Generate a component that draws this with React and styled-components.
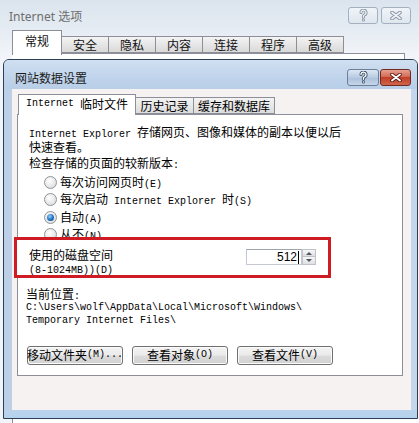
import React from 'react';
import styled, { createGlobalStyle, css } from 'styled-components';

const GlobalStyle = createGlobalStyle`
  html, body { margin: 0; padding: 0; background: #fff; }
  body {
    font-family: "Noto Sans CJK SC", "Liberation Sans", sans-serif;
    font-size: 12px;
    color: #000;
  }
`;

const Page = styled.div`
  width: 419px;
  height: 423px;
  overflow: hidden;
  display: flex;
  flex-direction: column;
  background: linear-gradient(#dbe4ee, #e5ecf3 30px, #f1f4f8 54px);
`;

const OuterTitle = styled.div`
  height: 30px;
  flex: none;
  display: flex;
  align-items: center;
  justify-content: space-between;
  padding: 1px 8px 0 9px;
  box-sizing: border-box;
`;

const OuterCaption = styled.span`
  font-family: "Noto Sans", "Noto Sans CJK SC", sans-serif;
  font-size: 12px;
  color: #6e6e6e;
`;

const CaptionButtons = styled.div`
  display: flex;
  gap: ${p => (p.$active ? 1 : 3)}px;
`;

const CapButton = styled.div`
  width: ${p => p.$w}px;
  height: 17px;
  box-sizing: border-box;
  border-radius: 3px;
  display: flex;
  align-items: center;
  justify-content: center;
  ${p => p.$variant === 'inactive' && css`
    border: 1px solid #a2b0c0;
    background: linear-gradient(#f0f4f8, #dfe6ee);
  `}
  ${p => p.$variant === 'help' && css`
    border: 1px solid #6d7f96;
    background: linear-gradient(#dbe6f3, #b8cbe2 50%, #a9bfd9 51%, #c6d6ea);
  `}
  ${p => p.$variant === 'close' && css`
    border: 1px solid #6f2b22;
    background: linear-gradient(#e7a092, #d26a55 45%, #c23f27 50%, #d0644b);
  `}
`;

const OuterTabStrip = styled.div`
  height: 23px;
  flex: none;
  display: flex;
  align-items: flex-end;
  padding-left: 12px;
`;

const OuterTab = styled.div`
  box-sizing: border-box;
  width: ${p => (p.$selected ? 50 : 48)}px;
  height: ${p => (p.$selected ? 25 : 17)}px;
  margin-bottom: ${p => (p.$selected ? -2 : 0)}px;
  margin-left: ${p => (p.$first ? 0 : -1)}px;
  border: 1px solid #8c8f98;
  border-bottom: ${p => (p.$selected ? 'none' : '1px solid #8c8f98')};
  background: ${p => (p.$selected ? '#fff' : 'linear-gradient(#f4f4f4, #e6e6e6 50%, #d9d9d9)')};
  position: relative;
  z-index: ${p => (p.$selected ? 2 : 1)};
  display: flex;
  align-items: ${p => (p.$selected ? 'flex-start' : 'center')};
  padding-top: ${p => (p.$selected ? 3 : 0)}px;
  justify-content: center;
  font-size: 12px;
  line-height: 14px;
  color: #111;
`;

const OuterPanelEdge = styled.div`
  height: 5px;
  flex: none;
  margin: 0 14px 0 12px;
  border-top: 1px solid #8c8f98;
  border-right: 1px solid #8c8f98;
  background: #fff;
`;

const Dialog = styled.div`
  height: 360px;
  flex: none;
  margin: 0 1px 0 3px;
  box-sizing: border-box;
  border: 1px solid #2f3f52;
  border-radius: 6px 6px 0 0;
  display: flex;
  flex-direction: column;
  background: linear-gradient(90deg, #bccfe6, #c9daee 30%, #c3d6eb);
`;

const DialogTitle = styled.div`
  height: 29px;
  flex: none;
  box-sizing: border-box;
  display: flex;
  align-items: center;
  justify-content: space-between;
  padding: 5px 6px 0 11px;
  border-radius: 5px 5px 0 0;
  background: linear-gradient(#d0dff1, #c0d4eb 60%, #b8cee8);
`;

const DialogCaption = styled.span`
  font-size: 12px;
  color: #1b1b1b;
`;

const Client = styled.div`
  height: 321px;
  flex: none;
  margin: 0 6px 0 8px;
  box-sizing: border-box;
  padding-top: 5px;
  background: #f6f2f2;
  display: flex;
  flex-direction: column;
`;

const FrameBottom = styled.div`
  flex: 1;
  background: linear-gradient(#bcd3ea, #b3d2ee);
`;

const InnerTabStrip = styled.div`
  height: 20px;
  flex: none;
  display: flex;
  align-items: flex-end;
  padding-left: 6px;
`;

const InnerTab = styled.div`
  box-sizing: border-box;
  width: ${p => p.$w}px;
  height: ${p => (p.$selected ? 21 : 17)}px;
  margin-bottom: ${p => (p.$selected ? -1 : 0)}px;
  margin-left: ${p => (p.$first ? 0 : -1)}px;
  border: 1px solid #8c8f98;
  border-bottom: ${p => (p.$selected ? 'none' : '1px solid #8c8f98')};
  background: ${p => (p.$selected ? '#fff' : 'linear-gradient(#f3f3f3, #e8e8e8 50%, #dcdcdc)')};
  position: relative;
  z-index: ${p => (p.$selected ? 2 : 1)};
  display: flex;
  align-items: center;
  justify-content: center;
  padding-bottom: ${p => (p.$selected ? 2 : 0)}px;
  white-space: nowrap;
  line-height: 14px;
`;

const TabPanel = styled.div`
  height: 262px;
  flex: none;
  margin: 0 8px 0 5px;
  box-sizing: border-box;
  border: 1px solid #8c8f98;
  background: #fff;
  padding: 10px 10px 0 11px;
  display: flex;
  flex-direction: column;
`;

const M = styled.span`
  font-family: "Liberation Mono", "DejaVu Sans Mono", monospace;
  font-size: 10px;
  line-height: 10px;
`;

const Para = styled.div`
  height: ${p => p.$lines * 13}px;
  line-height: 13px;
  margin-top: ${p => p.$mt || 0}px;
  margin-left: ${p => p.$ml || 0}px;
  white-space: nowrap;
  flex: none;
`;

const RadioList = styled.div`
  margin-top: 4.5px;
  padding-left: 15px;
  display: flex;
  flex-direction: column;
  flex: none;
`;

const RadioRow = styled.div`
  height: 17.5px;
  display: flex;
  align-items: center;
  gap: 3px;
  line-height: 13px;
  white-space: nowrap;
`;

const RadioCircle = styled.span`
  width: 13px;
  height: 13px;
  box-sizing: border-box;
  border-radius: 50%;
  border: 1px solid #8f9399;
  background: radial-gradient(circle at 40% 35%, #ffffff, #e2e2e2 70%, #cfd0d2);
  display: flex;
  align-items: center;
  justify-content: center;
  flex: none;

  &::after {
    content: '';
    display: ${p => (p.$checked ? 'block' : 'none')};
    width: 7px;
    height: 7px;
    border-radius: 50%;
    background: radial-gradient(circle at 40% 35%, #8fd0ff, #1f6fbf 55%, #0d3f7a);
  }
`;

const Highlight = styled.div`
  margin: -6.5px 0 0 -15px;
  width: 317px;
  height: 41px;
  flex: none;
  box-sizing: border-box;
  border: 3px solid #cf1b24;
  background: #fff;
  position: relative;
  z-index: 1;
  display: flex;
  justify-content: space-between;
  align-items: flex-start;
  padding: 8px 12px 0 12px;
`;

const SizeLabel = styled.div`
  display: flex;
  flex-direction: column;
  white-space: nowrap;
`;

const LabelLine = styled.div`
  height: ${p => p.$h}px;
  line-height: ${p => p.$h}px;
`;

const Spin = styled.div`
  margin-top: 1px;
  display: flex;
  height: 16px;
`;

const SpinInput = styled.div`
  width: 56px;
  height: 16px;
  box-sizing: border-box;
  border: 1px solid #c5cad2;
  border-top-color: #9ea4ad;
  display: flex;
  align-items: center;
  justify-content: flex-end;
  padding-right: 2px;
  font-family: "Liberation Sans", sans-serif;
  font-size: 12px;
  line-height: 14px;
`;

const Caret = styled.span`
  width: 1px;
  height: 13px;
  background: #000;
  margin-left: 1px;
`;

const SpinButtons = styled.div`
  width: 14px;
  display: flex;
  flex-direction: column;
`;

const SpinButton = styled.div`
  height: 8px;
  box-sizing: border-box;
  border: 1px solid #bfc3c9;
  border-top: ${p => (p.$down ? 'none' : '1px solid #bfc3c9')};
  background: linear-gradient(#f7f7f7, #dedfe2);
  display: flex;
  align-items: center;
  justify-content: center;

  &::after {
    content: '';
    border-left: 3px solid transparent;
    border-right: 3px solid transparent;
    ${p => (p.$down ? 'border-top: 3px solid #4d5560;' : 'border-bottom: 3px solid #4d5560;')}
  }
`;

const PathText = styled.div`
  height: 26px;
  flex: none;
  margin: 1.5px 0 0 -3px;
  font-family: "Liberation Mono", "DejaVu Sans Mono", monospace;
  font-size: 10px;
  line-height: 13px;
  white-space: nowrap;
`;

const ButtonRow = styled.div`
  margin: 18.5px 0 0 -2px;
  display: flex;
  gap: 9px;
  flex: none;
`;

const PushButton = styled.div`
  width: 96px;
  height: 19px;
  box-sizing: border-box;
  border: 1px solid #707070;
  border-radius: 3px;
  background: linear-gradient(#f3f3f3, #ebebeb 48%, #dcdcdc 52%, #d0d0d0);
  box-shadow: inset 0 0 0 1px #fbfbfb;
  display: flex;
  align-items: center;
  justify-content: center;
  white-space: nowrap;
  line-height: 14px;
`;

const OuterBottom = styled.div`
  flex: 1;
  margin-left: 12px;
  border-left: 1px solid #8c8f98;
  background: #fff;
`;

const HelpGlyph = ({ stroke, fill }) => (
  <svg width="9" height="13" viewBox="0 0 9 13">
    <path d="M2 3.6 A2.5 2.5 0 1 1 5.2 6 Q4.4 6.5 4.4 7.5 V8.3" fill="none" stroke={stroke} strokeWidth="3" strokeLinecap="round" />
    <circle cx="4.4" cy="11" r="1.5" fill={stroke} />
    <path d="M2 3.6 A2.5 2.5 0 1 1 5.2 6 Q4.4 6.5 4.4 7.5 V8.3" fill="none" stroke={fill} strokeWidth="1.3" strokeLinecap="round" />
    <circle cx="4.4" cy="11" r="0.7" fill={fill} />
  </svg>
);

const CloseGlyph = ({ stroke, fill }) => (
  <svg width="12" height="9" viewBox="0 0 12 9">
    <path d="M2 1.5 L10 7.5 M10 1.5 L2 7.5" stroke={stroke} strokeWidth="3.6" strokeLinecap="round" />
    <path d="M2 1.5 L10 7.5 M10 1.5 L2 7.5" stroke={fill} strokeWidth="1.8" strokeLinecap="round" />
  </svg>
);

const outerTabs = ['常规', '安全', '隐私', '内容', '连接', '程序', '高级'];

const radios = [
  { label: <>每次访问网页时<M>(E)</M></>, checked: false },
  { label: <>每次启动<M> Internet Explorer </M>时<M>(S)</M></>, checked: false },
  { label: <>自动<M>(A)</M></>, checked: true },
  { label: <>从不<M>(N)</M></>, checked: false },
];

const App = () => (
  <Page>
    <GlobalStyle />
    <OuterTitle>
      <OuterCaption>Internet 选项</OuterCaption>
      <CaptionButtons>
        <CapButton $variant="inactive" $w={30}>
          <HelpGlyph stroke="#8592a2" fill="#eef2f6" />
        </CapButton>
        <CapButton $variant="inactive" $w={30}>
          <CloseGlyph stroke="#8592a2" fill="#eef2f6" />
        </CapButton>
      </CaptionButtons>
    </OuterTitle>

    <OuterTabStrip>
      {outerTabs.map((t, i) => (
        <OuterTab key={t} $selected={i === 0} $first={i === 0}>{t}</OuterTab>
      ))}
    </OuterTabStrip>
    <OuterPanelEdge />

    <Dialog>
      <DialogTitle>
        <DialogCaption>网站数据设置</DialogCaption>
        <CaptionButtons $active>
          <CapButton $variant="help" $w={32}>
            <HelpGlyph stroke="#3d4f66" fill="#ffffff" />
          </CapButton>
          <CapButton $variant="close" $w={31}>
            <CloseGlyph stroke="#5a1a12" fill="#ffffff" />
          </CapButton>
        </CaptionButtons>
      </DialogTitle>

      <Client>
        <InnerTabStrip>
          <InnerTab $selected $first $w={118}><M>Internet&nbsp;</M>临时文件</InnerTab>
          <InnerTab $w={59}>历史记录</InnerTab>
          <InnerTab $w={82}>缓存和数据库</InnerTab>
        </InnerTabStrip>

        <TabPanel>
          <Para $lines={2}>
            <M>Internet Explorer </M>存储网页、图像和媒体的副本以便以后<br />
            快速查看。
          </Para>
          <Para $lines={1} $mt={5}>检查存储的页面的较新版本<M>:</M></Para>

          <RadioList>
            {radios.map((r, i) => (
              <RadioRow key={i}>
                <RadioCircle $checked={r.checked} />
                <span>{r.label}</span>
              </RadioRow>
            ))}
          </RadioList>

          <Highlight>
            <SizeLabel>
              <LabelLine $h={14}>使用的磁盘空间</LabelLine>
              <LabelLine $h={11}><M>(8-1024MB))(D)</M></LabelLine>
            </SizeLabel>
            <Spin>
              <SpinInput>512<Caret /></SpinInput>
              <SpinButtons>
                <SpinButton />
                <SpinButton $down />
              </SpinButtons>
            </Spin>
          </Highlight>

          <Para $lines={1} $mt={8.5} $ml={-3}>当前位置<M>:</M></Para>
          <PathText>
            C:\Users\wolf\AppData\Local\Microsoft\Windows\<br />
            Temporary Internet Files\
          </PathText>

          <ButtonRow>
            <PushButton>移动文件夹<M>(M)...</M></PushButton>
            <PushButton>查看对象<M>(O)</M></PushButton>
            <PushButton>查看文件<M>(V)</M></PushButton>
          </ButtonRow>
        </TabPanel>
      </Client>
      <FrameBottom />
    </Dialog>
    <OuterBottom />
  </Page>
);

export default App;
